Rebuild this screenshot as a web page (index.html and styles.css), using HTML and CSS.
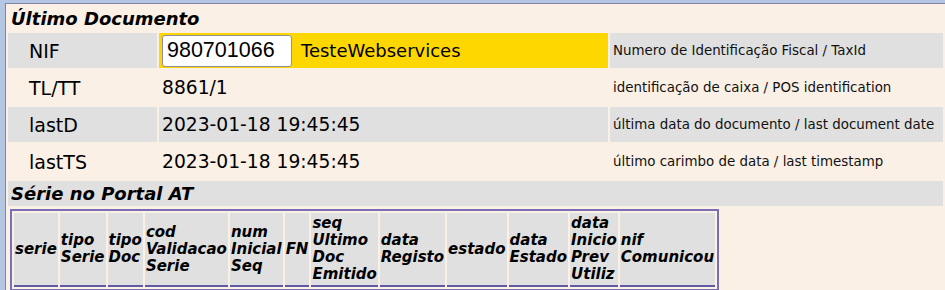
FILE: index.html
```html
<!DOCTYPE html>
<html lang="pt">
<head>
  <meta charset="UTF-8" />
  <title>Último Documento</title>
  <link rel="stylesheet" href="styles.css">
</head>
<body>
  <div class="page">
    <table class="doc">
      <tr>
        <th colspan="3" class="section">Último Documento</th>
      </tr>
      <tr class="odd">
        <td class="label">NIF</td>
        <td class="value highlight">
          <input type="text" class="nif-input" value="980701066">
          <span class="company">TesteWebservices</span>
        </td>
        <td class="desc">Numero de Identificação Fiscal / TaxId</td>
      </tr>
      <tr>
        <td class="label">TL/TT</td>
        <td class="value">8861/1</td>
        <td class="desc">identificação de caixa / POS identification</td>
      </tr>
      <tr class="odd">
        <td class="label">lastD</td>
        <td class="value">2023-01-18 19:45:45</td>
        <td class="desc">última data do documento / last document date</td>
      </tr>
      <tr>
        <td class="label">lastTS</td>
        <td class="value">2023-01-18 19:45:45</td>
        <td class="desc">último carimbo de data / last timestamp</td>
      </tr>
      <tr>
        <th colspan="3" class="section grey">Série no Portal AT</th>
      </tr>
      <tr>
        <td colspan="3" class="nested">
          <table class="series">
            <tr>
              <th>serie</th>
              <th>tipo<br>Serie</th>
              <th>tipo<br>Doc</th>
              <th>cod<br>Validacao<br>Serie</th>
              <th>num<br>Inicial<br>Seq</th>
              <th>FN</th>
              <th>seq<br>Ultimo<br>Doc<br>Emitido</th>
              <th>data<br>Registo</th>
              <th>estado</th>
              <th>data<br>Estado</th>
              <th>data<br>Inicio<br>Prev<br>Utiliz</th>
              <th>nif<br>Comunicou</th>
            </tr>
          </table>
        </td>
      </tr>
    </table>
  </div>
</body>
</html>
```

FILE: styles.css
```css
html, body {
  margin: 0;
  height: 100%;
  font-family: 'DejaVu Sans', Verdana, sans-serif;
  background: #b4c6e2;
  color: #000;
  overflow: hidden;
}

.page {
  margin: 3px 0 0 5px;
  border-top: 1px solid #7f82ad;
  border-left: 1px solid #7f82ad;
  background: #faf0e6;
  height: 100%;
}

.doc {
  width: 100%;
  border-spacing: 2px;
}

.doc td {
  padding: 0;
  height: 35px;
  vertical-align: middle;
}

.section {
  height: 25px;
  padding: 0 0 0 3px;
  text-align: left;
  font-size: 18px;
  font-style: italic;
  font-weight: bold;
}

.section.grey {
  background: #e0e0e0;
}

.odd td {
  background: #e0e0e0;
}

.label {
  width: 128px;
  padding-left: 21px !important;
  font-size: 19px;
}

.value {
  width: 446px;
  padding-left: 3px !important;
  font-size: 18.7px;
}

.odd .highlight {
  background: #ffd700;
}

.nif-input {
  width: 130px;
  height: 32px;
  box-sizing: border-box;
  margin: 0;
  padding: 0 4px;
  border: 1px solid #8f8f9d;
  border-radius: 3px;
  background: #fff;
  font-family: 'Liberation Sans', Arial, sans-serif;
  font-size: 21.5px;
  color: #000;
  vertical-align: middle;
}

.company {
  margin-left: 3px;
  font-size: 18px;
  vertical-align: middle;
}

.desc {
  padding-left: 3px !important;
  font-size: 13.4px;
  white-space: nowrap;
  color: #111;
}

.doc td.nested {
  height: auto;
  padding: 1px 0 0 2px;
}

.series {
  border: 2px solid #7a6fb4;
  border-spacing: 2px;
}

.series th {
  background: #e0e0e0;
  border-bottom: 2px solid #5e5aa6;
  padding: 2px 1px;
  text-align: left;
  font-size: 15px;
  font-style: italic;
  font-weight: bold;
  line-height: 17px;
  white-space: nowrap;
}
```
